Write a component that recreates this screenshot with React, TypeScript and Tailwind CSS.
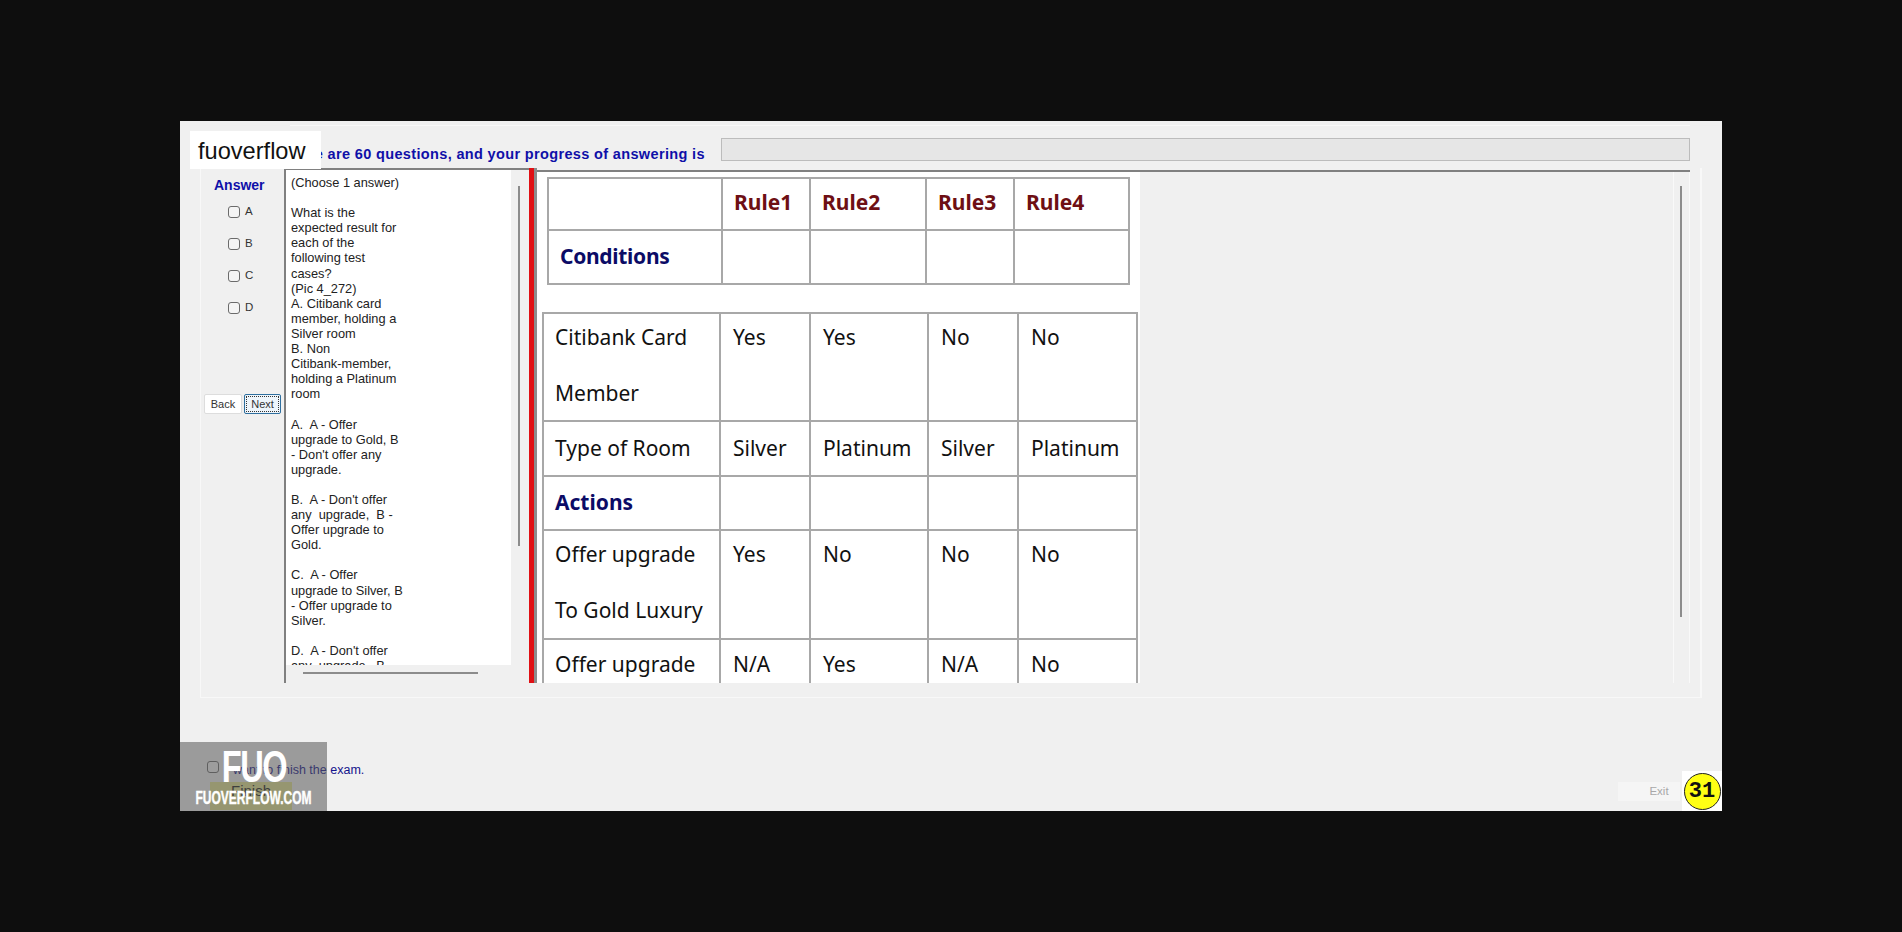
const rows1 = [
  { h: "h-[50px]", cells: ["", "Rule1", "Rule2", "Rule3", "Rule4"] },
  { h: "h-[52px]", cells: ["Conditions", "", "", "", ""] },
];

const rows2 = [
  { h: "h-[106px]", label: ["Citibank Card", "Member"], cells: ["Yes", "Yes", "No", "No"], lift: "-mt-[5px]" },
  { h: "h-[53px]", label: ["Type of Room"], cells: ["Silver", "Platinum", "Silver", "Platinum"], lift: "" },
  { h: "h-[52px]", label: ["Actions"], cells: ["", "", "", ""], lift: "", heading: true },
  { h: "h-[107px]", label: ["Offer upgrade", "To Gold Luxury"], cells: ["Yes", "No", "No", "No"], lift: "-mt-[5px]" },
  { h: "h-[112px]", label: ["Offer upgrade", "To Silver Luxury"], cells: ["N/A", "Yes", "N/A", "No"], lift: "-mt-[4px]" },
];

const question = `(Choose 1 answer)

What is the
expected result for
each of the
following test
cases?
(Pic 4_272)
A. Citibank card
member, holding a
Silver room
B. Non
Citibank-member,
holding a Platinum
room

A.  A - Offer
upgrade to Gold, B
- Don't offer any
upgrade.

B.  A - Don't offer
any  upgrade,  B -
Offer upgrade to
Gold.

C.  A - Offer
upgrade to Silver, B
- Offer upgrade to
Silver.

D.  A - Don't offer
any  upgrade,  B -
Offer upgrade to
Silver.`;

function Box() {
  return <span className="block shrink-0 w-[12px] h-[12px] rounded-[3px] border border-[#6b6b6b] bg-[#f4f4f4]" />;
}

function RuleTable() {
  return (
    <div className="ml-[10px] w-[583px] grid grid-cols-[172px_86px_114px_86px_113px] gap-[2px] p-[2px] bg-[#a8a8a8]">
      {rows1.map((row, i) =>
        row.cells.map((cell, j) => (
          <div
            key={`${i}-${j}`}
            className={`${row.h} bg-white flex items-center pl-[11px] font-bold text-[21px] ${
              i === 0 ? "text-[#6e0f14] pb-[3px]" : "text-[#0b0b66] tracking-[-0.3px]"
            }`}
          >
            {cell}
          </div>
        ))
      )}
    </div>
  );
}

function ResultTable() {
  return (
    <div className="ml-[5px] mt-[27px] w-[596px] grid grid-cols-[175px_88px_116px_88px_117px] gap-[2px] p-[2px] bg-[#a8a8a8]">
      {rows2.map((row, i) => (
        <div key={i} className="contents">
          <div className={`${row.h} bg-white pl-[11px] overflow-hidden text-[21px] ${row.label.length === 1 ? "flex items-center" : ""}`}>
            <div className={`${row.lift} ${row.label.length > 1 ? "leading-[56px]" : ""} ${row.heading ? "font-bold text-[#0b0b66]" : "text-[#111]"}`}>
              {row.label.map((l) => (
                <div key={l}>{l}</div>
              ))}
            </div>
          </div>
          {row.cells.map((cell, j) => (
            <div
              key={j}
              className={`${row.h} bg-white pl-[12px] overflow-hidden text-[21px] text-[#111] ${row.label.length === 1 ? "flex items-center" : ""}`}
            >
              <div className={`${row.lift} ${row.label.length > 1 ? "leading-[56px]" : ""}`}>{cell}</div>
            </div>
          ))}
        </div>
      ))}
    </div>
  );
}

export default function App() {
  return (
    <div className="min-h-[932px] bg-[#0e0e0e] pt-[121px] pl-[180px] font-['Liberation_Sans',sans-serif]">
      <div className="relative w-[1542px] h-[690px] bg-[#f0f0f0] overflow-hidden flex flex-col">
        {/* header row */}
        <div className="flex items-center h-[23px] mt-[17px] ml-[102px]">
          <span className="w-[439px] mt-[10px] whitespace-nowrap font-bold text-[14.5px] tracking-[0.35px] text-[#0f0fa8]">
            There are 60 questions, and your progress of answering is
          </span>
          <div className="w-[969px] h-[23px] bg-[#e6e6e6] border border-[#bcbcbc]" />
        </div>

        {/* main group */}
        <div className="ml-[20px] mt-[7px] w-[1502px] h-[530px] border-r-2 border-b border-l border-[#f8f8f8] flex">
          <div className="w-[83px] shrink-0 flex flex-col text-[11.5px] text-[#333]">
            <div className="mt-[7px] pl-[13px] font-bold text-[14px] text-[#0f0fa8]">Answer</div>
            <div className="mt-[10px] flex flex-col gap-[20px] pl-[27px]">
              {["A", "B", "C", "D"].map((o) => (
                <div key={o} className="flex items-center gap-[5px] h-[12px]">
                  <Box />
                  <span className="-mt-[1px]">{o}</span>
                </div>
              ))}
            </div>
            <div className="mt-[80px] ml-[3px] flex gap-[2px]">
              <button className="w-[38px] h-[20px] shrink-0 bg-white border border-[#dddddd] rounded-[2px] text-[#333] text-[11px]">Back</button>
              <button className="w-[37px] h-[20px] shrink-0 bg-[#eef5fb] border border-[#2f6f9f] rounded-[2px] outline-1 outline-dotted -outline-offset-3 outline-[#333] text-[#333] text-[11px]">Next</button>
            </div>
          </div>

          <div className="w-[245px] shrink-0 h-[515px] border-l-2 border-t-2 border-[#808080] flex flex-col">
            <div className="flex h-[495px]">
              <div className="w-[225px] shrink-0 bg-white h-full overflow-hidden pl-[5px] pt-[5px] whitespace-pre text-[12.8px] leading-[15.1px] text-[#222]">
                {question}
              </div>
              <div className="ml-[7px] mt-[16px] w-[2px] h-[360px] bg-[#8c8c8c]" />
            </div>
            <div className="mt-[7px] ml-[17px] w-[175px] h-[2px] bg-[#8c8c8c]" />
          </div>

          <div className="w-[5px] h-[515px] shrink-0 bg-[#e01014]" />
          <div className="w-[3px] h-[515px] shrink-0 bg-[#8c8c8c]" />

          <div className="w-[1153px] h-[513px] shrink-0 mt-[2px] border-t-2 border-[#808080] flex">
            <div className="w-[603px] h-full bg-white pt-[5px] overflow-hidden font-['Noto_Sans',sans-serif]">
              <RuleTable />
              <ResultTable />
            </div>
            <div className="ml-[533px] w-[17px] h-full border-x border-[#f9f9f9]">
              <div className="ml-[6px] mt-[14px] w-[2px] h-[431px] bg-[#8c8c8c]" />
            </div>
          </div>
        </div>

        {/* bottom */}
        <div className="flex-1 flex justify-between">
          <div className="ml-[27px] mt-[63px] flex flex-col">
            <div className="flex items-center gap-[7px] text-[12.5px] text-[#14148c]">
              <span className="-mt-[6px]">
                <Box />
              </span>
              <span>I want to finish the exam.</span>
            </div>
            <button className="ml-[3px] mt-[2px] w-[82px] h-[28px] bg-[#e4e490] text-[#222] text-[15px] text-center leading-[16px] pb-[10px]">Finish</button>
          </div>
          <button className="mt-[84px] mr-[42px] w-[62px] h-[19px] bg-[#f5f5f5] text-[11.5px] text-[#a8a8a8] pl-[20px]">Exit</button>
        </div>

        {/* overlays */}
        <div className="absolute left-[110px] right-[32px] top-[4px] h-[1px] bg-[#f9f9f9]" />
        <div className="absolute left-[10px] top-[10px] w-[131px] h-[38px] bg-white flex items-center pl-[8px] pt-[3px] text-[23.6px] text-[#111]">
          fuoverflow
        </div>
        <div className="absolute left-0 bottom-0 w-[147px] h-[69px] bg-[#555555]/55 text-white font-bold text-center">
          <div className="mt-[3px] ml-[1px] text-[44px] leading-none tracking-[-2px] scale-x-[0.74]">FUO</div>
          <div className="mt-[1px] -mx-[20px] text-[17.5px] leading-none scale-x-[0.686] whitespace-nowrap [-webkit-text-stroke:0.4px_white]">FUOVERFLOW.COM</div>
        </div>
        <div className="absolute right-0 bottom-0 w-[40px] h-[40px] bg-white flex items-center justify-center">
          <div className="w-[37px] h-[37px] rounded-full bg-[#ffff14] border border-[#222] flex items-center justify-center font-['Liberation_Mono',monospace] font-bold text-[22px] text-[#111]">
            31
          </div>
        </div>
      </div>
    </div>
  );
}
